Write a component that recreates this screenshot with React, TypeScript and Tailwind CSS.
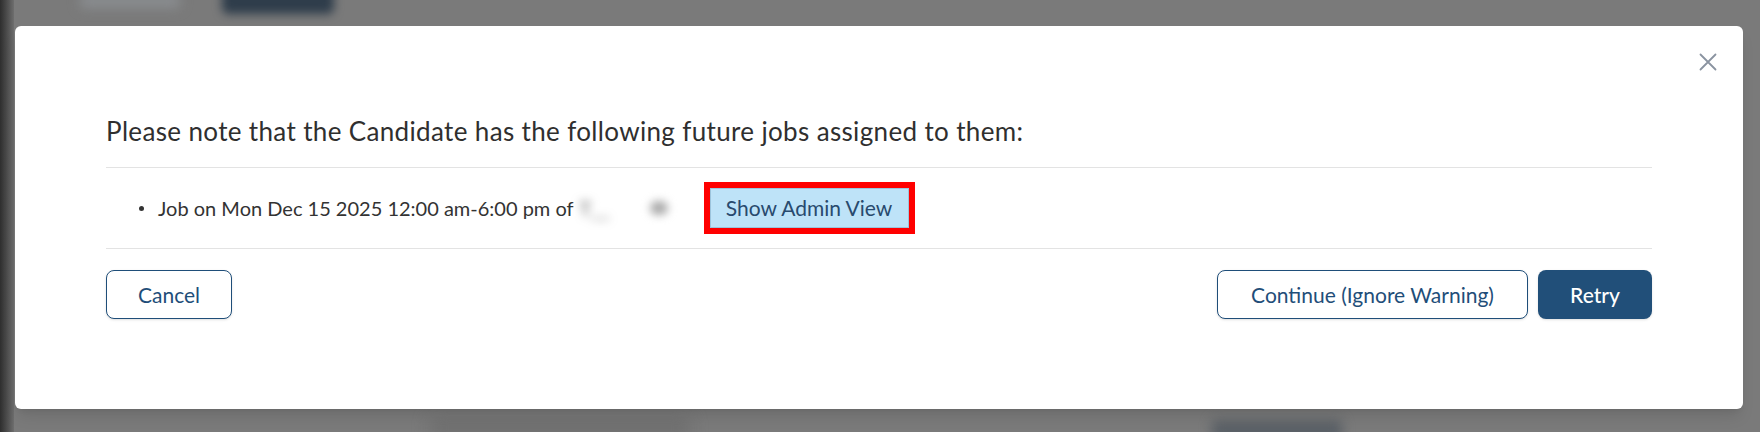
import React from "react";

export default function App() {
  return (
    <div
      className="relative h-[432px] w-[1760px] overflow-hidden bg-[#7a7a7a] pt-[26px] pl-[15px]"
      style={{ fontFamily: "Lato, 'Noto Sans', sans-serif" }}
    >
      {/* blurred page behind overlay */}
      <div className="absolute left-0 top-0 h-full w-[14px] bg-gradient-to-r from-[#2e2e2e] to-[#6e6e6e]" />
      <div className="absolute left-[222px] top-[-14px] h-[28px] w-[112px] rounded-md bg-[#2f3d4b] blur-[5px]" />
      <div className="absolute left-[80px] top-[-6px] h-[14px] w-[100px] rounded bg-[#8a8d90] blur-[6px]" />
      <div className="absolute left-[1212px] top-[420px] h-[24px] w-[130px] rounded bg-[#5a6066] blur-[6px]" />
      <div className="absolute left-[430px] top-[418px] h-[20px] w-[260px] rounded bg-[#6f6f6f] blur-[8px]" />

      <div className="relative h-[383px] w-[1728px] rounded-md bg-white px-[91px] pt-[89px] shadow-lg">
        <button className="absolute right-[26px] top-[27px] flex h-[18px] w-[18px] items-center justify-center text-[#8a93a0]">
          <svg width="18" height="18" viewBox="0 0 18 18" fill="none" stroke="currentColor" strokeWidth="1.8" strokeLinecap="round">
            <path d="M1.5 1.5 L16.5 16.5 M16.5 1.5 L1.5 16.5" />
          </svg>
        </button>

        <div className="border-b border-[#e3e3e3] pb-[20px]">
          <p className="text-[26px] leading-[32px] tracking-[0.35px] text-[#2f2f2f]">
            Please note that the Candidate has the following future jobs assigned to them:
          </p>
        </div>

        <div className="flex h-[81px] items-center border-b border-[#e3e3e3]">
          <span className="ml-[33px] mr-[14px] h-[5px] w-[5px] rounded-full bg-[#333]" />
          <span className="text-[20px] text-[#333]">Job on Mon Dec 15 2025 12:00 am-6:00 pm of</span>
          <span className="ml-[6px] flex w-[124px] items-center">
            <span className="text-[20px] text-[#555] blur-[5px]">T__</span>
            <span className="ml-[40px] h-[14px] w-[18px] rounded-full bg-[#aaa] blur-[4px]" />
          </span>
          <span className="border-[6px] border-[#ff0000]">
            <button className="flex h-[40px] w-[199px] items-center justify-center border border-[#9cc4dc] bg-[#bee3f8] text-[21px] text-[#284a6e]">
              Show Admin View
            </button>
          </span>
        </div>

        <div className="flex items-center justify-between pt-[21px]">
          <button className="h-[49px] w-[126px] rounded-lg border border-[#1f4e79] bg-white text-[21px] text-[#1f4e79] shadow-sm">
            Cancel
          </button>
          <div className="flex gap-[10px]">
            <button className="h-[49px] w-[311px] rounded-lg border border-[#1f4e79] bg-white text-[21px] text-[#1f4e79] shadow-sm">
              Continue (Ignore Warning)
            </button>
            <button className="h-[49px] w-[114px] rounded-lg bg-[#214f79] text-[21px] font-medium text-white shadow-sm">
              Retry
            </button>
          </div>
        </div>
      </div>
    </div>
  );
}
